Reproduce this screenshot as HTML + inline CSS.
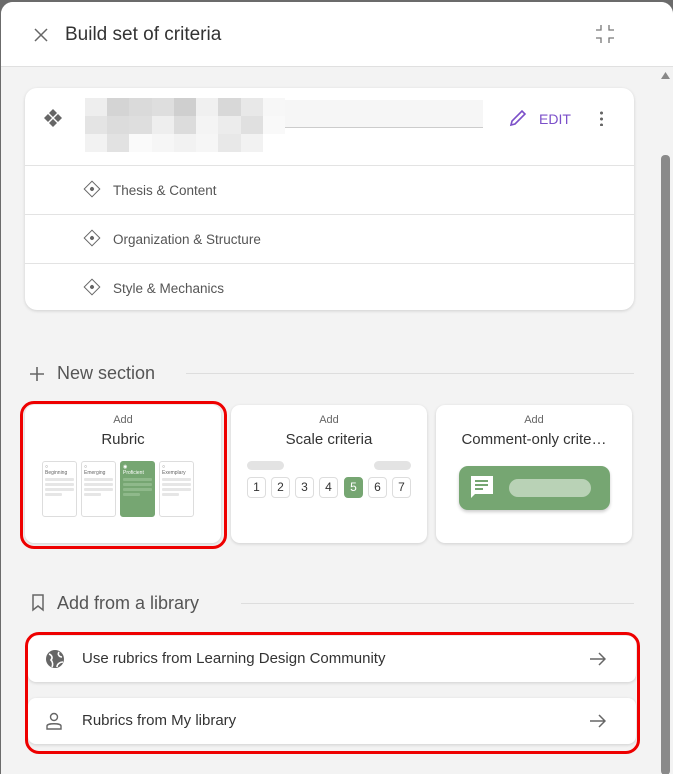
<!DOCTYPE html>
<html><head><style>
*{box-sizing:border-box;margin:0;padding:0}
body{width:673px;height:774px;overflow:hidden;background:#6b6b6b;font-family:"Liberation Sans",sans-serif;position:relative}
.dlg{position:absolute;left:1px;top:2px;width:672px;height:772px;background:#f3f3f3;border-radius:12px 12px 0 0;overflow:hidden}
.hdr{position:absolute;left:0;top:0;width:672px;height:65px;background:#fff;border-bottom:1px solid #e0e0e0}
.title{position:absolute;left:64px;top:22px;font-size:19px;color:#333}
.sb{position:absolute;left:656px;top:65px;width:16px;height:707px;background:#f3f3f3}
.thumb{position:absolute;left:660px;top:153px;width:9px;height:620px;background:#8a8a8a;border-radius:4px}
.card{position:absolute;background:#fff;border-radius:12px;box-shadow:0 1px 3px rgba(0,0,0,.15)}
.row{position:absolute;left:0;width:609px;height:49px;border-top:1px solid #e3e3e3;font-size:13.5px;color:#555;padding:17px 0 0 88px}
.dia{position:absolute;left:61px;top:17px;width:12px;height:12px;border:1.5px solid #666;transform:rotate(45deg)}
.dia:after{content:"";position:absolute;left:2.5px;top:2.5px;width:4px;height:4px;background:#666;border-radius:50%}
.sec{position:absolute;font-size:18px;color:#555}
.line{position:absolute;height:1px;background:#ddd}
.opt{position:absolute;top:403px;width:196px;height:138px;background:#fff;border-radius:9px;box-shadow:0 1px 3px rgba(0,0,0,.15);text-align:center}
.opt .a{margin-top:9px;font-size:11px;color:#666}
.opt .t{margin-top:5px;font-size:15px;color:#333}
.red{position:absolute;border:3.5px solid #e00;border-radius:14px}
.col{position:absolute;top:56px;width:35px;height:56px;border:1px solid #ddd;border-radius:3px;background:#fff;font-size:5px;color:#666;text-align:left;padding:2px 2px}
.col i{display:block;height:3px;background:#e6e6e6;margin-top:2px;border-radius:1px}
.n{position:absolute;top:0;width:19px;height:21px;border:1px solid #ddd;border-radius:4px;font-size:12px;color:#333;line-height:19px;text-align:center}
.lib{position:absolute;left:27px;width:608px;height:46px;background:#fff;border-radius:8px;box-shadow:0 1px 3px rgba(0,0,0,.15);font-size:15px;color:#333;padding:14px 0 0 54px}
.px{position:absolute;width:17px;height:17px}
</style></head><body>
<div class="dlg">
<div class="hdr">
<svg style="position:absolute;left:33px;top:26px" width="14" height="14"><path d="M1 1L13 13M13 1L1 13" stroke="#666" stroke-width="1.5"/></svg>
<div class="title">Build set of criteria</div>
<svg style="position:absolute;left:594px;top:22px" width="20" height="20" stroke="#777" stroke-width="1.3" fill="none"><path d="M6 1V6H1M14 1V6H19M6 19V14H1M14 19V14H19"/></svg>
</div>
<div class="sb"></div><div class="thumb"></div>
<svg style="position:absolute;left:660px;top:70px" width="9" height="7"><path d="M0 7L4.5 0L9 7Z" fill="#888"/></svg>
<div class="card" style="left:24px;top:86px;width:609px;height:222px">
<svg style="position:absolute;left:19px;top:21px" width="18" height="18" fill="#666"><path d="M9 0L13 4L9 8L5 4ZM4 5L8 9L4 13L0 9ZM14 5L18 9L14 13L10 9ZM9 10L13 14L9 18L5 14Z"/></svg>
<div style="position:absolute;left:60px;top:12px;width:200px;height:28px;background:#f6f6f6"></div>
<div style="position:absolute;left:260px;top:12px;width:198px;height:28px;background:#f6f6f6;border-bottom:1px solid #ccc"></div>
<div style="position:absolute;left:60px;top:10px;width:200px;height:54px;display:grid;grid-template-columns:repeat(9,1fr);grid-template-rows:repeat(3,1fr)">
<i style="background:#eee"></i><i style="background:#d4d4d4"></i><i style="background:#dadada"></i><i style="background:#dedede"></i><i style="background:#cfcfcf"></i><i style="background:#f0f0f0"></i><i style="background:#d8d8d8"></i><i style="background:#e8e8e8"></i><i style="background:#f7f7f7"></i>
<i style="background:#e4e4e4"></i><i style="background:#dcdcdc"></i><i style="background:#dedede"></i><i style="background:#eee"></i><i style="background:#dcdcdc"></i><i style="background:#f4f4f4"></i><i style="background:#ececec"></i><i style="background:#e0e0e0"></i><i style="background:#f9f9f9"></i>
<i style="background:#f2f2f2"></i><i style="background:#e2e2e2"></i><i style="background:#fafafa"></i><i style="background:#f6f6f6"></i><i style="background:#f2f2f2"></i><i style="background:#f6f6f6"></i><i style="background:#e8e8e8"></i><i style="background:#f2f2f2"></i><i style="background:#fff"></i>
</div>
<svg style="position:absolute;left:484px;top:21px" width="18" height="18" fill="none" stroke="#7b4fc9" stroke-width="1.6"><path d="M2 16L3 12L13 2L16 5L6 15Z"/></svg>
<div style="position:absolute;left:514px;top:23px;font-size:14px;color:#7b4fc9">EDIT</div>
<div style="position:absolute;left:575px;top:22px;width:3px;height:16px;background:radial-gradient(circle,#666 1.4px,transparent 1.6px) 0 0/3px 6px"></div>
<div class="row" style="top:77px"><span class="dia"></span>Thesis &amp; Content</div>
<div class="row" style="top:126px"><span class="dia"></span>Organization &amp; Structure</div>
<div class="row" style="top:175px"><span class="dia"></span>Style &amp; Mechanics</div>
</div>
<svg style="position:absolute;left:29px;top:365px" width="14" height="14" stroke="#666" stroke-width="1.6"><path d="M7 0V14M0 7H14"/></svg>
<div class="sec" style="left:56px;top:361px">New section</div>
<div class="line" style="left:185px;top:371px;width:448px"></div>
<div class="opt" style="left:24px"><div class="a">Add</div><div class="t">Rubric</div>
<div class="col" style="left:17px">○<br>Beginning<i></i><i></i><i></i><i style="width:60%"></i></div>
<div class="col" style="left:56px">○<br>Emerging<i></i><i></i><i></i><i style="width:60%"></i></div>
<div class="col" style="left:95px;background:#76a672;border-color:#76a672;color:#fff">◉<br>Proficient<i style="background:#8fb98b"></i><i style="background:#8fb98b"></i><i style="background:#8fb98b"></i><i style="width:60%;background:#8fb98b"></i></div>
<div class="col" style="left:134px">○<br>Exemplary<i></i><i></i><i></i><i style="width:60%"></i></div>
</div>
<div class="opt" style="left:230px"><div class="a">Add</div><div class="t">Scale criteria</div>
<div style="position:absolute;left:16px;top:56px;width:37px;height:9px;background:#e3e3e3;border-radius:5px"></div>
<div style="position:absolute;left:143px;top:56px;width:37px;height:9px;background:#e3e3e3;border-radius:5px"></div>
<div style="position:absolute;left:16px;top:72px;width:170px;height:22px">
<span class="n" style="left:0">1</span><span class="n" style="left:24px">2</span><span class="n" style="left:48px">3</span><span class="n" style="left:72px">4</span><span class="n" style="left:97px;background:#76a672;color:#fff;border-color:#76a672">5</span><span class="n" style="left:121px">6</span><span class="n" style="left:145px">7</span></div>
</div>
<div class="opt" style="left:435px"><div class="a">Add</div><div class="t">Comment-only crite…</div>
<div style="position:absolute;left:23px;top:61px;width:151px;height:44px;background:#76a672;border-radius:9px;box-shadow:0 2px 3px rgba(0,0,0,.2)">
<svg style="position:absolute;left:11px;top:9px" width="24" height="24"><path d="M1 1H23V19H5L1 23Z" fill="#fff"/><path d="M5 6H18M5 10H18M5 14H13" stroke="#76a672" stroke-width="2"/></svg>
<div style="position:absolute;left:50px;top:13px;width:82px;height:18px;background:#b9d2b6;border-radius:9px"></div></div>
</div>
<div class="red" style="left:19px;top:399px;width:207px;height:148px"></div>
<svg style="position:absolute;left:30px;top:592px" width="14" height="18" fill="none" stroke="#666" stroke-width="1.5"><path d="M2 1H12V16L7 12L2 16Z"/></svg>
<div class="sec" style="left:56px;top:591px">Add from a library</div>
<div class="line" style="left:240px;top:601px;width:393px"></div>
<div class="lib" style="top:634px"><svg style="position:absolute;left:17px;top:13px" width="20" height="20"><circle cx="10" cy="10" r="9" fill="#666"/><path d="M4 5C7 6 8 9 6 11C8 13 8 16 7 18M14 3C12 6 15 8 17 8M12 18C12 15 15 13 18 13" stroke="#fff" stroke-width="1.6" fill="none"/></svg>Use rubrics from Learning Design Community<svg style="position:absolute;left:562px;top:16px" width="16" height="14" fill="none" stroke="#666" stroke-width="1.5"><path d="M0 7H15M9 1L15 7L9 13"/></svg></div>
<div class="lib" style="top:696px"><svg style="position:absolute;left:18px;top:14px" width="16" height="18" fill="none" stroke="#666" stroke-width="1.4"><circle cx="8" cy="5" r="3.5"/><path d="M1 17V14C1 11 15 11 15 14V17Z"/></svg>Rubrics from My library<svg style="position:absolute;left:562px;top:16px" width="16" height="14" fill="none" stroke="#666" stroke-width="1.5"><path d="M0 7H15M9 1L15 7L9 13"/></svg></div>
<div class="red" style="left:24px;top:630px;width:615px;height:122px"></div>
</div>
</body></html>
